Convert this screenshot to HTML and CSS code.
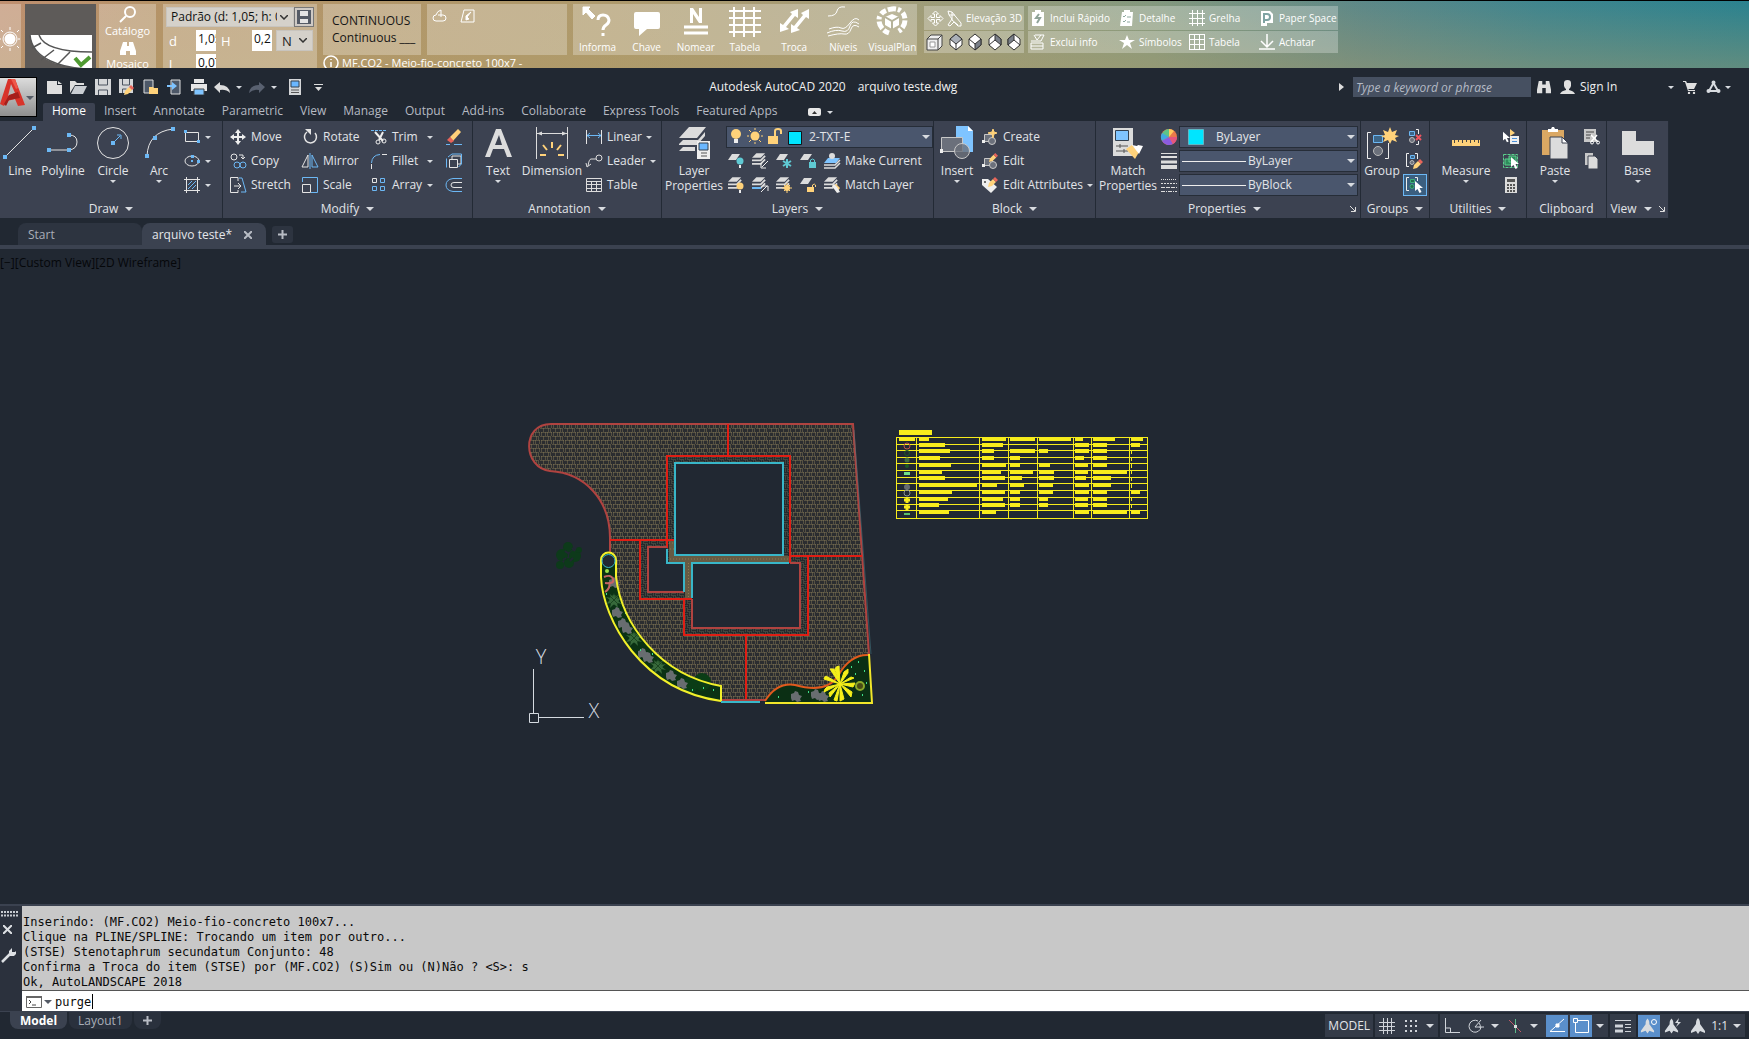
FILE: index.html
```html
<!DOCTYPE html>
<html lang="en">
<head>
<meta charset="utf-8">
<title>Autodesk AutoCAD 2020 - arquivo teste.dwg</title>
<link rel="stylesheet" href="styles.css">
</head>
<body>
<svg class="defs" aria-hidden="true">
  <symbol id="sheet" viewBox="0 0 12 6"><path d="M4 0h8L8 6H0z" fill="#dcdcdc"/></symbol>
  <symbol id="stack" viewBox="0 0 16 13"><path d="M5 0h10l-5 5H0z" fill="#dcdcdc"/><path d="M0 8h10l5-5M0 12h10l5-5" fill="none" stroke="#dcdcdc" stroke-width="2"/></symbol>
  <symbol id="pencil" viewBox="0 0 10 10"><path d="M0 10l1-4 4-4 3 3-4 4z" fill="#ffd27a"/><path d="M5 2l2-2 3 3-2 2z" fill="#e8645a"/></symbol>
  <symbol id="cursor" viewBox="0 0 8 12"><path d="M0 0v10l2.500-2 2 4 2-1-2-4H8z" fill="#fff"/></symbol>
  <symbol id="man" viewBox="0 0 16 16"><path d="M8 0c2 2 2 4 2 6l5 7v2l-5-2-2 3-2-3-5 2v-2l5-7c0-2 0-4 2-6z" fill="#d8dce0"/></symbol>
</svg>

<section class="plugin" aria-label="AutoLANDSCAPE">
  <div class="glass sun"><svg width="20" height="24" viewBox="0 0 20 24"><circle cx="10" cy="12" r="5.500" fill="#fff"/><circle cx="10" cy="12" r="7" fill="none" stroke="#fff"/><path d="M10 3V0M10 21v3M1 12h-2M18 12h3M3 5L1 3M3 19l-2 2M17 5l2-2M17 19l2 2" stroke="#fff"/></svg></div>
  <button class="curb" aria-label="Meio-fio"><svg width="71" height="64" viewBox="0 0 71 64"><path d="M5 28h62v34c-28-1-58-6-62-34z" fill="#fff"/><path d="M5 28c2 24 32 34 62 34M14 28c4 12 24 17 53 17M16 36l-9 5M29 43l-13 10M45 45l-13 13" fill="none" stroke="#555" stroke-width="1.500"/><path d="M50 51l6 7 9-8" fill="none" stroke="#4f9a32" stroke-width="4"/></svg></button>
  <div class="glass catalog">
    <button class="tool"><svg width="18" height="17" viewBox="0 0 18 17" fill="none" stroke="#fff" stroke-width="2"><circle cx="11" cy="6" r="5"/><path d="M7 10l-6 6"/></svg>Catálogo</button>
    <button class="tool"><svg width="16" height="16" viewBox="0 0 16 16" fill="#fff"><path d="M3 2h4v4h2V2h4l3 9v4h-6v-4H6v4H0v-4z"/></svg>Mosaico</button>
  </div>
  <div class="glass dims">
    <div class="dims-row"><select class="preset" aria-label="Padrão"><option>Padrão (d: 1,05; h: 0,2)</option></select><button class="save" aria-label="Salvar"><svg width="16" height="16" viewBox="0 0 16 16"><path d="M1 1h14v14H1z" fill="#555b66"/><path d="M4 2h8v5H4zM4 10h8v4H4z" fill="#e4e4e4"/></svg></button></div>
    <div class="dims-row fields"><label for="fd">d</label><input id="fd" value="1,05"><label for="fh">H</label><input id="fh" value="0,2"><select class="yes" aria-label="N"><option>N</option></select></div>
    <div class="dims-row fields"><label for="fl">l</label><input id="fl" value="0,07"></div>
  </div>
  <div class="linecol">
    <div class="glass linetype">CONTINUOUS<br>Continuous ___</div>
    <div class="info"><svg width="16" height="16" viewBox="0 0 16 16" fill="none" stroke="#fff" stroke-width="1.500"><circle cx="8" cy="8" r="7"/><path d="M8 7v5M8 4v1"/></svg>MF.CO2 - Meio-fio-concreto 100x7 -</div>
  </div>
  <div class="glass sketch"><svg width="15" height="14" viewBox="0 0 15 14" fill="none" stroke="#fff"><path d="M9 6h2q3 0 3 3t-3 3H4q-3 0-3-3t3-3q1-4 5-5v7M6 6h3"/></svg><svg width="15" height="15" viewBox="0 0 15 15" fill="none" stroke="#fff"><path d="M4 1h10v12H1z"/><path d="M11 3L7 8l2 2-3 1V7z" fill="#fff"/></svg></div>
  <div class="glass tools">
    <button class="tool"><svg width="32" height="30" viewBox="0 0 32 30" fill="none" stroke="#fff"><path d="M1 1h7L6 3l7 7-3 3-6-7-3 3z" fill="#fff"/><path d="M16 14q0-5 5-5t6 5q0 3-3 5t-3 5M21 27v3" stroke-width="3"/></svg>Informa</button>
    <button class="tool"><svg width="28" height="30" viewBox="0 0 28 30"><path d="M3 6h22q2 0 2 2v13q0 2-2 2H14l-8 7v-7H3q-2 0-2-2V8q0-2 2-2z" fill="#fff"/></svg>Chave</button>
    <button class="tool"><svg width="26" height="30" viewBox="0 0 26 30"><path d="M7 17V2h3l6 9V2h3v15h-3L10 8v9z" fill="#fff"/><path d="M1 21h24M1 27h24" stroke="#fff" stroke-width="3"/></svg>Nomear</button>
    <button class="tool"><svg width="32" height="32" viewBox="0 0 32 32"><path d="M5 1v30M15 1v30M25 1v30M0 5h32M0 12h32M0 19h32M0 26h32" stroke="#fff" stroke-width="2"/></svg>Tabela</button>
    <button class="tool"><svg width="32" height="28" viewBox="0 0 32 28"><path d="M2 26v-9l3 2L14 8l-2-2 8-3v9l-3-2L8 21l3 2zM13 27v-9l3 2L25 9l-2-2 8-4v10l-3-2-9 11 3 2z" fill="#fff"/></svg>Troca</button>
    <button class="tool"><svg width="32" height="31" viewBox="0 0 32 31" fill="none" stroke="#fff"><path d="M1 10q8 0 9-5t8-4M2 23q8-3 12-1t9-5 9-3M0 27q9-4 15-2t8-5 9-2M1 30q11-3 16-2t7-5 8-2"/></svg>Níveis</button>
    <button class="tool"><svg width="32" height="30" viewBox="0 0 32 30"><path d="M16 8l7 3v8l-7 4-7-4v-8z" fill="#fff"/><path d="M9 11l7 4 7-4M16 15v8" fill="none" stroke="#b5b39a" stroke-width="2"/><path d="M13 27c-6-2-10-7-10-13C3 8 8 4 16 3s13 4 13 11c0 5-3 10-8 12" fill="none" stroke="#fff" stroke-width="5" stroke-dasharray="6 2 8 2 3 3"/></svg>VisualPlan</button>
  </div>
  <div class="pairs elev">
    <div class="glass"><button class="act"><svg width="17" height="17" viewBox="0 0 17 17" fill="none" stroke="#fff"><path d="M8.500 1L5.500 4h2v3.500H4v-2l-3 3 3 3v-2h3.500V13h-2l3 3 3-3h-2V9.500H13v2l3-3-3-3v2H9.500V4h2z"/></svg><svg width="16" height="17" viewBox="0 0 16 17" fill="none" stroke="#fff"><path d="M1 1l4 1 4 5 5 6v3h-3L7 12l-4 4-2-1 4-6-3-4zM5 2v8l6 5M2 5h6"/></svg>Elevação 3D</button></div>
    <div class="glass cubes">
      <button aria-label="Caixa"><svg width="17" height="17" viewBox="0 0 17 17" fill="#eee" stroke="#444"><path d="M1 5l4-4h11v11l-4 4H1zM1 5h11v11M12 5l4-4"/><path d="M4 8h5v5H4z" fill="#fff" stroke="#999"/></svg></button>
      <button aria-label="Vista SO"><svg width="14" height="18" viewBox="0 0 14 18" stroke="#333"><path d="M7 1l6 5v6l-6 5-6-5V6z" fill="#fff"/><path d="M7 1l6 5-6 5-6-5z" fill="#aab0b8"/><path d="M7 11v6"/></svg></button>
      <button aria-label="Vista SE"><svg width="14" height="18" viewBox="0 0 14 18" stroke="#333"><path d="M7 1l6 5v6l-6 5-6-5V6z" fill="#fff"/><path d="M7 11l6-5v6l-6 5z" fill="#7a8089"/><path d="M1 6l6 5"/></svg></button>
      <button aria-label="Vista NE"><svg width="14" height="18" viewBox="0 0 14 18" stroke="#333"><path d="M7 1l6 5v6l-6 5-6-5V6z" fill="#fff"/><path d="M7 1l6 5v6L7 7z" fill="#7a8089"/><path d="M1 12l6-5"/></svg></button>
      <button aria-label="Vista NO"><svg width="14" height="18" viewBox="0 0 14 18" stroke="#333"><path d="M7 1l6 5v6l-6 5-6-5V6z" fill="#fff"/><path d="M7 1L1 6v6l6-5z" fill="#7a8089"/><path d="M7 7l6 5"/></svg></button>
    </div>
  </div>
  <div class="pairs acts">
    <div class="glass four">
      <button class="act"><svg width="16" height="16" viewBox="0 0 16 16"><path d="M2 2h3V0h6v2h3v14H2z" fill="#fff"/><path d="M9 4L6 8h4l-3 5" fill="none" stroke="#8fa398" stroke-width="2"/></svg>Inclui Rápido</button>
      <button class="act"><svg width="16" height="16" viewBox="0 0 16 16"><path d="M3 2h2V0h6v2h3l-1 14H1z" fill="#fff"/><path d="M4 6l1 1 2-2M8 7h4M4 11l1 1 2-2M8 12h3" fill="none" stroke="#8fa9a0"/></svg>Detalhe</button>
      <button class="act"><svg width="16" height="16" viewBox="0 0 16 16"><path d="M3.500 0v16M8.500 0v16M13.500 0v16M0 3.500h16M0 8.500h16M0 13.500h16" stroke="#fff"/></svg>Grelha</button>
      <button class="act"><svg width="16" height="16" viewBox="0 0 16 16"><path d="M2 1h9l3 3v9h-6v3H2z" fill="#fff"/><path d="M5 13V4h3q3 0 3 3t-3 3H5" fill="none" stroke="#7fa3a3" stroke-width="2"/></svg>Paper Space</button>
    </div>
    <div class="glass four">
      <button class="act"><svg width="16" height="16" viewBox="0 0 16 16" fill="none" stroke="#fff"><path d="M1 7h10l3-6H5M1 9h12v6H1zM1 12h12M4 1l3 5 4-5"/></svg>Exclui info</button>
      <button class="act"><svg width="16" height="16" viewBox="0 0 16 16"><path d="M8 1l2 5h6l-5 3 2 6-5-4-5 4 2-6-5-3h6z" fill="#fff"/></svg>Símbolos</button>
      <button class="act"><svg width="16" height="16" viewBox="0 0 16 16"><path d="M0 .5h16M0 5.500h16M0 10.500h16M0 15.500h16M.5 0v16M5.500 0v16M10.500 0v16M15.500 0v16" stroke="#fff"/></svg>Tabela</button>
      <button class="act"><svg width="16" height="16" viewBox="0 0 16 16" fill="none" stroke="#fff" stroke-width="1.500"><path d="M8 0v13M2 7l6 6 6-6M0 15h16"/></svg>Achatar</button>
    </div>
  </div>
</section>

<header class="head">
  <button class="app" aria-label="Application menu"><svg width="26" height="28" viewBox="0 0 26 28"><path d="M8 0h7l10 26-7 1-3-7-8 2-3 5-4-2z" fill="#d8332a"/><path d="M11 5l4 9-7 3z" fill="#b9b9b9"/><path d="M4 25l5-9 9-3 2 6-11 2-3 6z" fill="#a51f1c"/><path d="M11 0h4l3 9-2 1z" fill="#ee5a4c"/></svg><i class="dd dark"></i></button>
  <div class="head-main">
    <div class="titlebar">
      <div class="qat">
        <button aria-label="New"><svg width="17" height="13" viewBox="0 0 17 13"><path d="M1 0h10v4h5v9H1z" fill="#dedede"/><path d="M12 0l4 3h-4z" fill="#dedede"/></svg></button>
        <button aria-label="Open"><svg width="17" height="14" viewBox="0 0 17 14"><path d="M0 13V1h5l2 2h7v2H5z" fill="#dedede"/><path d="M5 6h12l-4 8H1z" fill="#c9cdd2"/></svg></button>
        <button aria-label="Save"><svg width="16" height="16" viewBox="0 0 16 16"><path d="M0 0h16v16H0z" fill="#d4d6d8"/><path d="M3.500 0v6h9V0M3.500 16v-5h9v5" fill="none" stroke="#4a525e"/></svg></button>
        <button aria-label="Save As"><svg width="16" height="16" viewBox="0 0 16 16"><path d="M0 0h14v14H0z" fill="#d4d6d8"/><path d="M3.500 0v6h7V0M3.500 14v-4h4" fill="none" stroke="#4a525e"/><use href="#pencil" x="5" y="6" width="10" height="10"/></svg></button>
        <button aria-label="Open from mobile"><svg width="16" height="16" viewBox="0 0 16 16"><path d="M1 1h9v13H1z" fill="#4d5868" stroke="#dedede"/><path d="M6 15V8h4l1 1h4v6z" fill="#ffd27a"/></svg></button>
        <button aria-label="Save to mobile"><svg width="16" height="16" viewBox="0 0 16 16"><path d="M4 1h9v14H4z" fill="#4d5868" stroke="#dedede"/><path d="M0 6h5V3l5 4-5 4V8H0z" fill="#7fc4ff"/></svg></button>
        <button aria-label="Plot"><svg width="16" height="16" viewBox="0 0 16 16"><path d="M3 0h10v4H3zM0 5h16v7H0z" fill="#e6e6e6"/><path d="M3 10h10v6H3z" fill="#7fc4ff" stroke="#444"/></svg></button>
        <button class="pair" aria-label="Undo"><svg width="16" height="11" viewBox="0 0 16 11"><path d="M0 5l6-5v3q9 0 10 8-4-4-10-3v3z" fill="#dcdcdc"/></svg><i class="dd s"></i></button>
        <button class="pair" aria-label="Redo"><svg width="16" height="11" viewBox="0 0 16 11"><path d="M16 5l-6-5v3q-9 0-10 8 4-4 10-3v3z" fill="#596170"/></svg><i class="dd s"></i></button>
        <button class="sheets" aria-label="Sheet set"><svg width="12" height="16" viewBox="0 0 12 16"><path d="M0 0h12v16H0z" fill="#d4d6d8"/><path d="M2 2h8v6H2z" fill="#6ab7ff" stroke="#33404f"/><path d="M2 11h8M2 13.500h8" stroke="#555"/></svg></button>
        <button class="custom" aria-label="Customize"><svg width="9" height="7" viewBox="0 0 9 7"><path d="M0 .5h9" stroke="#ddd"/><path d="M1 3h7L4.500 7z" fill="#ddd"/></svg></button>
      </div>
      <div class="title"><span>Autodesk AutoCAD 2020</span><span>arquivo teste.dwg</span></div>
      <div class="infocenter">
        <svg width="5" height="8" viewBox="0 0 5 8"><path d="M0 0l5 4-5 4z" fill="#ddd"/></svg>
        <input class="search" type="search" placeholder="Type a keyword or phrase" aria-label="Search">
        <button aria-label="Find"><svg width="14" height="14" viewBox="0 0 16 16" fill="#e0e0e0"><path d="M2 1h4v4h4V1h4l2 10v4h-6V9H6v6H0v-4z"/></svg></button>
        <button class="signin"><svg width="15" height="14" viewBox="0 0 15 14" fill="#e0e0e0"><path d="M4 3q0-3 3.500-3T11 3v3q-1 3-2 3v1q5 1 6 4H0q1-3 6-4V9Q5 9 4 6z"/></svg>Sign In<i class="dd s"></i></button>
        <button aria-label="App store"><svg width="14" height="13" viewBox="0 0 14 13" fill="#e0e0e0"><path d="M0 0h3l1 2h10l-3 6H5L6 9h6v1H5L2 1H0z"/><circle cx="6" cy="12" r="1.200"/><circle cx="11" cy="12" r="1.200"/></svg></button>
        <button class="pair" aria-label="Connect"><svg width="15" height="14" viewBox="0 0 15 14" fill="none" stroke="#d8dce0" stroke-width="2"><path d="M7.500 3L3 11h9z"/><circle cx="7.500" cy="2.500" r="1"/><circle cx="2.500" cy="11" r="1"/><circle cx="12.500" cy="11" r="1"/></svg><i class="dd s"></i></button>
      </div>
    </div>
    <nav class="tabs">
      <a class="on" href="#">Home</a><a href="#">Insert</a><a href="#">Annotate</a><a href="#">Parametric</a><a href="#">View</a><a href="#">Manage</a><a href="#">Output</a><a href="#">Add-ins</a><a href="#">Collaborate</a><a href="#">Express Tools</a><a href="#">Featured Apps</a>
      <button class="pair" aria-label="Minimize ribbon"><svg width="13" height="8" viewBox="0 0 13 8"><rect width="13" height="8" rx="2" fill="#e8e8e8"/><path d="M4 6l2.500-3L9 6z" fill="#333"/></svg><i class="dd s"></i></button>
    </nav>
  </div>
</header>

<main class="ribbon">
  <section class="panel draw">
    <div class="body">
      <button class="big w40"><svg width="34" height="34" viewBox="0 0 34 34"><path d="M2 31L31 2" stroke="#e4e4e4"/><path d="M0 29h4v4H0zM29 0h4v4h-4z" fill="#6cb8f5"/></svg>Line</button>
      <button class="big w46"><svg width="34" height="34" viewBox="0 0 34 34"><path d="M3 24h20q8-1 8-8t-8-7" fill="none" stroke="#e4e4e4"/><path d="M1 22h4v4H1zM21 22h4v4h-4zM21 7h4v4h-4z" fill="#6cb8f5"/></svg>Polyline</button>
      <button class="big w54"><svg width="34" height="34" viewBox="0 0 34 34"><circle cx="17" cy="17" r="15.500" fill="none" stroke="#e4e4e4"/><path d="M15 15h4v4h-4z" fill="#6cb8f5"/><path d="M17 17l7-7M21 9h4v4" fill="none" stroke="#6cb8f5"/></svg>Circle<i class="dd s"></i></button>
      <button class="big w38"><svg width="34" height="34" viewBox="0 0 34 34"><path d="M5 30Q6 6 31 3" fill="none" stroke="#e4e4e4"/><path d="M3 28h4v4H3zM11 10h4v4h-4zM29 1h4v4h-4z" fill="#6cb8f5"/></svg>Arc<i class="dd s"></i></button>
      <div class="col icons">
        <button class="row" aria-label="Rectangle"><svg width="18" height="16" viewBox="0 0 18 16"><path d="M2.500 3.500h13v9h-13z" fill="none" stroke="#e4e4e4"/><path d="M1 1h3v3H1zM14 11h3v3h-3z" fill="#6cb8f5"/></svg><i class="dd s"></i></button>
        <button class="row" aria-label="Ellipse"><svg width="18" height="16" viewBox="0 0 18 16"><ellipse cx="9" cy="8" rx="7" ry="5" fill="none" stroke="#e4e4e4"/><path d="M8 2h3v3H8zM8 7h2v2H8zM14 7h3v3h-3z" fill="#6cb8f5"/></svg><i class="dd s"></i></button>
        <button class="row" aria-label="Hatch"><svg width="18" height="16" viewBox="0 0 18 16"><path d="M3.500 0v16M14.500 0v16M1 2.500h16M1 13.500h16" stroke="#e4e4e4"/><path d="M5 8l4-4M5 12l8-8M9 12l4-4" stroke="#6cb8f5"/></svg><i class="dd s"></i></button>
      </div>
    </div>
    <h2>Draw<i class="dd"></i></h2>
  </section>

  <section class="panel modify">
    <div class="body">
      <div class="col c72">
        <button class="row"><svg width="18" height="16" viewBox="0 0 18 16"><path d="M9 0l3 4h-2v3h3V5l4 3-4 3V9h-3v3h2l-3 4-3-4h2V9H5v2L1 8l4-3v2h3V4H6z" fill="#eee"/></svg>Move</button>
        <button class="row"><svg width="18" height="16" viewBox="0 0 18 16" fill="none"><circle cx="5" cy="4" r="3" stroke="#e4e4e4"/><path d="M10 2h4v4M12 4l2 2 2-2" stroke="#e4e4e4"/><circle cx="8" cy="12" r="3" stroke="#6cb8f5"/><circle cx="14" cy="12" r="3" stroke="#6cb8f5"/></svg>Copy</button>
        <button class="row"><svg width="18" height="16" viewBox="0 0 18 16" fill="none"><path d="M9 4V.5H1.500v15H9V13M5 9h7M9 6l3 3-3 3" stroke="#e4e4e4"/><path d="M10 1h3l4 14h-5" stroke="#6cb8f5"/></svg>Stretch</button>
      </div>
      <div class="col c69">
        <button class="row"><svg width="18" height="16" viewBox="0 0 18 16"><path d="M6 3a6 6 0 1 0 8 1" fill="none" stroke="#e4e4e4" stroke-width="1.500"/><path d="M4 0h6v6z" fill="#e4e4e4"/></svg>Rotate</button>
        <button class="row"><svg width="18" height="16" viewBox="0 0 18 16" fill="none"><path d="M7 2v12H1z" stroke="#e4e4e4"/><path d="M11 2v12h6z" stroke="#6cb8f5"/><path d="M9 0v16" stroke="#6cb8f5"/></svg>Mirror</button>
        <button class="row"><svg width="18" height="16" viewBox="0 0 18 16" fill="none"><path d="M1.500 5V.5h15v15H10" stroke="#6cb8f5"/><path d="M1.500 7.500h8v8h-8z" stroke="#e4e4e4"/></svg>Scale</button>
      </div>
      <div class="col c75">
        <button class="row"><svg width="18" height="16" viewBox="0 0 18 16" fill="none"><path d="M1 1.500h16" stroke="#6cb8f5" stroke-dasharray="3 1"/><path d="M5 3l8 9M13 3l-4 8" stroke="#eee" stroke-width="2"/><circle cx="8" cy="13" r="2" stroke="#eee"/><circle cx="14" cy="12" r="2" stroke="#eee"/></svg>Trim<i class="dd s end"></i></button>
        <button class="row"><svg width="18" height="16" viewBox="0 0 18 16" fill="none"><path d="M1.500 10Q2 2 10 1.500" stroke="#6cb8f5"/><path d="M12 1.500h5M1.500 11v5" stroke="#e4e4e4"/></svg>Fillet<i class="dd s end"></i></button>
        <button class="row"><svg width="18" height="16" viewBox="0 0 18 16" fill="none"><path d="M2.500 1.500h4v4h-4z" stroke="#e4e4e4"/><path d="M10.500 1.500h4v4h-4zM2.500 9.500h4v4h-4zM10.500 9.500h4v4h-4z" stroke="#6cb8f5"/></svg>Array<i class="dd s end"></i></button>
      </div>
      <div class="col">
        <button class="row" aria-label="Erase"><svg width="18" height="16" viewBox="0 0 18 16"><path d="M5 8l8-8 3 3-8 9z" fill="#ffd27a"/><path d="M5 8l4 4-3 2-4-3z" fill="#e8645a"/><path d="M1 15.500h4M9 15.500h8" stroke="#6cb8f5"/></svg></button>
        <button class="row" aria-label="Explode"><svg width="18" height="16" viewBox="0 0 18 16" fill="none"><path d="M4.500 6.500h8v8h-8zM7 6V3h9v8h-3" stroke="#e4e4e4"/><path d="M1.500 5.500v9M3 4l4-3h9.500v10l-3 3" stroke="#6cb8f5"/></svg></button>
        <button class="row" aria-label="Offset"><svg width="18" height="16" viewBox="0 0 18 16" fill="none"><path d="M17 1.500H8q-7 1-7 6.500t7 6.500h9" stroke="#6cb8f5"/><path d="M17 5.500H9q-3 0-3 2.500t3 2.500h8" stroke="#e4e4e4"/></svg></button>
      </div>
    </div>
    <h2>Modify<i class="dd"></i></h2>
  </section>

  <section class="panel annotation">
    <div class="body">
      <button class="big w50"><svg width="34" height="34" viewBox="0 0 34 34"><path d="M4 31L15 3h5l11 28h-5l-3-8H12l-3 8zM14 19h7l-3-10z" fill="#dcdcdc"/></svg>Text<i class="dd s"></i></button>
      <button class="big w58"><svg width="34" height="34" viewBox="0 0 34 34"><path d="M1.500 1v32M32.500 1v32M2 7.500h30" stroke="#dcdcdc"/><path d="M2 7.500l5-2v4zM32 7.500l-5-2v4z" fill="#dcdcdc"/><path d="M17 16v6M8 19l4 5M26 19l-4 5M5 29h6M23 29h6" stroke="#ffd27a" stroke-width="2"/></svg>Dimension</button>
      <div class="col ann">
        <button class="row"><svg width="18" height="16" viewBox="0 0 18 16"><path d="M1.500 1v14M16.500 1v14" stroke="#e4e4e4"/><path d="M2 6.500h14M5 4L2 6.500 5 9M13 4l3 2.500L13 9" fill="none" stroke="#6cb8f5"/></svg>Linear<i class="dd s gap"></i></button>
        <button class="row"><svg width="18" height="16" viewBox="0 0 18 16" fill="none" stroke="#dcdcdc"><circle cx="14" cy="5" r="3"/><path d="M11 6H6q-2 0-3 7M1 10l1 4 4-3"/></svg>Leader<i class="dd s gap"></i></button>
        <button class="row"><svg width="18" height="16" viewBox="0 0 18 16" fill="none" stroke="#dcdcdc"><path d="M1.500 1.500h15v13h-15zM1 4.500h16M1 7.500h16M1 11.500h16M6.500 4v10M11.500 4v10"/></svg>Table</button>
      </div>
    </div>
    <h2>Annotation<i class="dd"></i></h2>
  </section>

  <section class="panel layers">
    <div class="body">
      <button class="big w64"><svg width="34" height="34" viewBox="0 0 34 34"><path d="M12 1h17l-9 11H2zM2 18l4-4h15l7-8v4l-8 9H2zM2 25l4-4h12v4z" fill="#dcdcdc"/><path d="M20 15h13v18H20z" fill="#eee"/><path d="M22 17h9v7h-9z" fill="#6ab7ff" stroke="#33404f"/><path d="M24 27h6M24 30h6" stroke="#555"/></svg>Layer<br>Properties</button>
      <div class="col lay">
        <div class="combo"><svg width="78" height="18" viewBox="0 0 78 18"><circle cx="7" cy="6" r="5" fill="#ffd27a"/><path d="M5 11h4v4H5z" fill="#eee"/><circle cx="26" cy="8" r="4.500" fill="#ffd27a"/><path d="M26 0v2M26 14v2M18 8h2M32 8h2M20 2l2 2M30 12l2 2M20 14l2-2M30 4l2-2" stroke="#ffd27a"/><path d="M39 8h10v8H39z" fill="#ffd27a"/><path d="M46 8V3q0-2 3-2t3 2v3" fill="none" stroke="#ffd27a" stroke-width="2"/><path d="M59.500 3.500h13v13h-13z" fill="#00e5ff" stroke="#10151c"/></svg><select aria-label="Layer"><option>2-TXT-E</option></select><i class="dd"></i></div>
        <div class="line">
          <button aria-label="Off"><svg width="18" height="16" viewBox="0 0 18 16"><use href="#sheet" x="1" y="1" width="12" height="6"/><circle cx="13" cy="8" r="3.500" fill="#5fc9d3"/><path d="M12 12h2v3h-2z" fill="#eee"/></svg></button>
          <button aria-label="Isolate"><svg width="18" height="16" viewBox="0 0 18 16"><use href="#stack" x="1" width="14" height="12"/><path d="M17 8l-6 6M10 10v5h5" stroke="#eee" fill="none"/></svg></button>
          <button aria-label="Freeze"><svg width="18" height="16" viewBox="0 0 18 16"><use href="#sheet" x="1" y="1" width="12" height="6"/><path d="M12 6v9M8 8l8 5M16 8l-8 5" stroke="#5fc9d3" stroke-width="2"/></svg></button>
          <button aria-label="Lock"><svg width="18" height="16" viewBox="0 0 18 16"><use href="#sheet" x="1" y="1" width="12" height="6"/><path d="M10 9h7v6h-7z" fill="#5fc9d3"/><path d="M11.500 9V7q2-2 4 0v2" fill="none" stroke="#5fc9d3"/></svg></button>
          <button class="row"><svg width="18" height="16" viewBox="0 0 18 16"><path d="M5 5h12l-4 5H1z" fill="#7fc4ff"/><path d="M1 12h11l5-5M1 15h11l5-5" fill="none" stroke="#dcdcdc" stroke-width="1.500"/><circle cx="9" cy="3" r="3" fill="#dcdcdc"/></svg>Make Current</button>
        </div>
        <div class="line">
          <button aria-label="On"><svg width="18" height="16" viewBox="0 0 18 16"><use href="#stack" x="1" width="14" height="12"/><circle cx="13" cy="9" r="3.500" fill="#ffd27a"/><path d="M12 13h2v3h-2z" fill="#eee"/></svg></button>
          <button aria-label="Unisolate"><svg width="18" height="16" viewBox="0 0 18 16"><use href="#stack" x="1" width="14" height="12"/><path d="M1 11h9" stroke="#6cb8f5" stroke-width="2"/><path d="M10 15l6-6M12 9h5v5" stroke="#eee" fill="none"/></svg></button>
          <button aria-label="Thaw"><svg width="18" height="16" viewBox="0 0 18 16"><use href="#stack" x="1" width="14" height="12"/><circle cx="12" cy="11" r="3" fill="#ffd27a"/><path d="M12 6v10M7 11h10M9 8l6 6M15 8l-6 6" stroke="#ffd27a"/></svg></button>
          <button aria-label="Unlock"><svg width="18" height="16" viewBox="0 0 18 16"><use href="#sheet" x="1" y="1" width="12" height="6"/><path d="M8 10h7v5H8z" fill="#ffd27a"/><path d="M13.500 10V8q2-2 3 0v2" fill="none" stroke="#ffd27a"/></svg></button>
          <button class="row"><svg width="18" height="16" viewBox="0 0 18 16"><use href="#stack" x="1" width="14" height="12"/><path d="M9 9l4-2 4 4-3 4z" fill="#ffd27a"/><path d="M9 9l2-2 3 3 3 5-3 1z" fill="#eee"/></svg>Match Layer</button>
        </div>
      </div>
    </div>
    <h2>Layers<i class="dd"></i></h2>
  </section>

  <section class="panel block">
    <div class="body">
      <button class="big w46"><svg width="34" height="34" viewBox="0 0 34 34"><path d="M16 0h12l5 5v21H16z" fill="#7fc4ff"/><path d="M28 0v5h5z" fill="#fff"/><path d="M1.500 11.500h21v14h-21z" fill="#6b707b" stroke="#c8c8c8"/><circle cx="22" cy="25" r="7.500" fill="#6b707b" fill-opacity=".8" stroke="#c8c8c8"/><path d="M0 23h3v4H0z" fill="#eee"/></svg>Insert<i class="dd s"></i></button>
      <div class="col blk">
        <button class="row"><svg width="18" height="16" viewBox="0 0 18 16"><path d="M3.500 5.500h8v7h-8z" fill="#6b707b" stroke="#c8c8c8"/><circle cx="11" cy="12" r="3.500" fill="#6b707b" stroke="#c8c8c8"/><path d="M1 11h3v3H1z" fill="#eee"/><path d="M12 0l1 3 3 1-3 1-1 4-1-4-4-1 4-1z" fill="#ffd27a" stroke="#ffd27a"/></svg>Create</button>
        <button class="row"><svg width="18" height="16" viewBox="0 0 18 16"><path d="M3.500 5.500h8v7h-8z" fill="#6b707b" stroke="#c8c8c8"/><circle cx="12" cy="12" r="3.500" fill="#6b707b" stroke="#c8c8c8"/><path d="M1 11h3v3H1z" fill="#eee"/><use href="#pencil" x="8" width="9" height="9"/></svg>Edit</button>
        <button class="row"><svg width="18" height="16" viewBox="0 0 18 16"><path d="M1 2h6l9 8-6 6-9-8z" fill="#eee"/><circle cx="4" cy="5" r="1" fill="#444"/><use href="#pencil" x="7" width="10" height="10"/></svg>Edit Attributes<i class="dd s"></i></button>
      </div>
    </div>
    <h2>Block<i class="dd"></i></h2>
  </section>

  <section class="panel props">
    <div class="body">
      <button class="big w64"><svg width="34" height="34" viewBox="0 0 34 34"><path d="M2 2h20v28H2z" fill="#dcdcdc"/><path d="M4.500 4.500h13v10h-13z" fill="#7fc4ff" stroke="#33404f"/><path d="M5 20h12M5 25h12M9 18v4M13 23v4" stroke="#555"/><path d="M15 23l6-4 7 7-4 7z" fill="#ffd27a"/><path d="M21 19l5 1 1-1 5 1-3 6-1 2z" fill="#fff"/></svg>Match<br>Properties</button>
      <div class="col propcol">
        <div class="line"><svg width="18" height="18" viewBox="0 0 18 18"><circle cx="9" cy="9" r="8" fill="#eb7a4a"/><path d="M9 9V1a8 8 0 0 0-7 5z" fill="#5cc487"/><path d="M9 9L2 5a8 8 0 0 0 0 8z" fill="#3fa9e0"/><path d="M9 9l-7 4a8 8 0 0 0 11 3z" fill="#8a5ce0"/><path d="M9 9l4 7a8 8 0 0 0 4-7z" fill="#e5557f"/><path d="M9 9l5-6a8 8 0 0 0-5-2z" fill="#ffc95c"/></svg><div class="combo"><svg width="28" height="16" viewBox="0 0 28 16"><path d="M6.500.5h15v15h-15z" fill="#00e5ff" stroke="#5fb8c4"/></svg><select class="color" aria-label="Color"><option>ByLayer</option></select><i class="dd"></i></div></div>
        <div class="line"><svg width="18" height="18" viewBox="0 0 18 18"><path d="M1 1.500h16" stroke="#ddd"/><path d="M1 5h16" stroke="#ddd" stroke-width="2"/><path d="M1 10h16" stroke="#ddd" stroke-width="3"/><path d="M1 15h16" stroke="#ddd" stroke-width="4"/></svg><div class="combo"><span class="sample"></span><select aria-label="Lineweight"><option>ByLayer</option></select><i class="dd"></i></div></div>
        <div class="line"><svg width="18" height="18" viewBox="0 0 18 18" stroke="#ddd"><path d="M1 3.500h16" stroke-dasharray="1 1"/><path d="M1 7.500h16" stroke-dasharray="2 1"/><path d="M1 11.500h16" stroke-dasharray="4 1"/><path d="M1 15.500h16" stroke-dasharray="4 1 1 1"/></svg><div class="combo"><span class="sample"></span><select aria-label="Linetype"><option>ByBlock</option></select><i class="dd"></i></div></div>
      </div>
    </div>
    <h2>Properties<i class="dd"></i><svg class="launch" width="6" height="6" viewBox="0 0 6 6"><path d="M0 0l5 5M5.500 1v4.500H1" fill="none" stroke="#ddd"/></svg></h2>
  </section>

  <section class="panel groups">
    <div class="body">
      <button class="big w42"><svg width="34" height="34" viewBox="0 0 34 34"><path d="M6 6.500H2.500v26H6M20 32.500h3.500V17" fill="none" stroke="#eee"/><path d="M8.500 9.500h9v7h-9z" fill="#3d6688" stroke="#6cb8f5"/><circle cx="13" cy="25" r="4.500" fill="#6b707b" stroke="#bbb"/><path d="M25 1l2 5 5-2-2 5 4 1-4 2 2 4-5-2-2 4-2-4-5 2 2-4-4-2 4-1-2-5 5 2z" fill="#ffd27a"/></svg>Group</button>
      <div class="col">
        <button class="row" aria-label="Ungroup"><svg width="18" height="16" viewBox="0 0 18 16"><path d="M3.500 2.500h5v4h-5z" fill="#3d6688" stroke="#6cb8f5"/><circle cx="6" cy="11" r="2.500" fill="#6b707b" stroke="#bbb"/><path d="M10 .5h2.500V5M12.500 12v3.500H10" fill="none" stroke="#eee"/><path d="M10 6l5 5M15 6l-5 5" stroke="#ee5560" stroke-width="2"/></svg></button>
        <button class="row" aria-label="Group edit"><svg width="18" height="16" viewBox="0 0 18 16"><path d="M3 .5H.5v13H3M9 .5h2.500V6" fill="none" stroke="#eee"/><path d="M4.500 2.500h4v3h-4z" fill="#3d6688" stroke="#6cb8f5"/><circle cx="6" cy="9.500" r="2" fill="#6b707b" stroke="#bbb"/><use href="#pencil" x="7" y="6" width="10" height="10"/></svg></button>
        <button class="row sel" aria-label="Group selection"><svg width="18" height="16" viewBox="0 0 18 16"><path d="M3 .5H.5v13H3M9 .5h2.500V4" fill="none" stroke="#eee"/><path d="M4.500 2.500h4v3h-4z" fill="#24704d" stroke="#3fae7c"/><circle cx="6" cy="9.500" r="2" fill="#24704d" stroke="#3fae7c"/><use href="#cursor" x="9" y="4" width="8" height="12"/></svg></button>
      </div>
    </div>
    <h2>Groups<i class="dd"></i></h2>
  </section>

  <section class="panel utils">
    <div class="body">
      <button class="big w72"><svg width="34" height="34" viewBox="0 0 34 34"><path d="M3 14h28v6H3z" fill="#ffd27a"/><path d="M5.500 14v3M9.500 14v2M13.500 14v3M17.500 14v2M21.500 14v3M25.500 14v2M29.500 14v3" stroke="#444"/></svg>Measure<i class="dd s"></i></button>
      <div class="col">
        <button class="row" aria-label="Quick select"><svg width="18" height="16" viewBox="0 0 18 16"><path d="M8 0l5 4-5 3z" fill="#ffd27a"/><use href="#cursor" x="1" y="2" width="7" height="12"/><path d="M8 7h9v8H8z" fill="#eee"/><path d="M10 9.500h5M10 12.500h5" stroke="#4a90d9"/></svg></button>
        <button class="row" aria-label="Select all"><svg width="18" height="16" viewBox="0 0 18 16"><path d="M1.500 1.500h14v13h-14z" fill="none" stroke="#5ad08c" stroke-dasharray="3 1"/><path d="M7 3h7v6H7zM3 6h7v6H3z" fill="#2f8a5c" stroke="#5ad08c"/><use href="#cursor" x="9" y="4" width="8" height="12"/></svg></button>
        <button class="row" aria-label="Calculator"><svg width="18" height="16" viewBox="0 0 18 16"><path d="M3 0h12v16H3z" fill="#dcdcdc"/><path d="M5 2h8v3H5z" fill="#555"/><path d="M5 8h8M5 11h8M5 14h8" stroke="#555" stroke-width="2" stroke-dasharray="2 1"/></svg></button>
      </div>
    </div>
    <h2>Utilities<i class="dd"></i></h2>
  </section>

  <section class="panel clip">
    <div class="body">
      <button class="big w56"><svg width="34" height="34" viewBox="0 0 34 34"><path d="M4 4h22v25H4z" fill="#dba863"/><path d="M10 6V3h3l1-2h2l1 2h3v3z" fill="#fff"/><path d="M12 11h12l6 6v16H12z" fill="#dcdcdc" stroke="#3c4251"/><path d="M24 11v6h6z" fill="#fff" stroke="#3c4251"/></svg>Paste<i class="dd s"></i></button>
      <div class="col">
        <button class="row" aria-label="Cut"><svg width="18" height="16" viewBox="0 0 18 16"><path d="M1 0h12v13H1z" fill="#c8c8c8"/><path d="M3 3h8M3 6h5M3 9h4" stroke="#444"/><path d="M8 6l7 7M14 6l-6 7" stroke="#fff" stroke-width="1.500"/><circle cx="9" cy="13.500" r="1.500" fill="none" stroke="#fff"/><circle cx="15" cy="13.500" r="1.500" fill="none" stroke="#fff"/></svg></button>
        <button class="row" aria-label="Copy"><svg width="18" height="16" viewBox="0 0 18 16"><path d="M2 0h8v12H2z" fill="#c8c8c8"/><path d="M5 3h7l3 3v10H5z" fill="#dcdcdc" stroke="#3c4251"/></svg></button>
      </div>
    </div>
    <h2>Clipboard</h2>
  </section>

  <section class="panel view">
    <div class="body"><button class="big w62"><svg width="34" height="34" viewBox="0 0 34 34"><path d="M1 5h14v10h18v14H1z" fill="#dcdcdc"/></svg>Base<i class="dd s"></i></button></div>
    <h2>View<i class="dd"></i><svg class="launch" width="6" height="6" viewBox="0 0 6 6"><path d="M0 0l5 5M5.500 1v4.500H1" fill="none" stroke="#ddd"/></svg></h2>
  </section>
</main>

<nav class="files">
  <a class="file" href="#">Start</a>
  <a class="file on" href="#">arquivo teste*<svg width="8" height="8" viewBox="0 0 8 8"><path d="M0 0l8 8M8 0L0 8" stroke="#b8bcc4" stroke-width="2"/></svg></a>
  <button class="add" aria-label="New tab"><svg width="9" height="9" viewBox="0 0 9 9"><path d="M4.500 0v9M0 4.500h9" stroke="#b8bcc4" stroke-width="2"/></svg></button>
</nav>

<section class="canvas">
  <p class="viewport">[−][Custom View][2D Wireframe]</p>
  <svg class="drawing" aria-label="Site plan">
    <defs>
      <pattern id="brick" width="12" height="8" patternUnits="userSpaceOnUse"><path d="M1 .5h11M0 4.500h10M1.500 0v4M5.500 0v4M7.500 0v4M11.500 0v4M3.500 4v4M8.500 4v4M10.500 4v4" stroke="#8a7d58" stroke-opacity=".45" fill="none"/></pattern>
      <pattern id="weave" width="8" height="8" patternUnits="userSpaceOnUse"><path d="M0 1.500h4M0 3.500h4M5.500 0v4M7.500 0v4M4 5.500h4M4 7.500h4M1.500 4v4M3.500 4v4" stroke="#4a4d44" stroke-opacity=".8"/></pattern>
      <g id="bush"><circle r="5" fill="#255229"/><path d="M0-7l1 5 4-4-2 5 5-1-4 3 4 3-5-1 1 5-4-4-4 4 1-5-5 1 4-4-4-3 5 1-1-4 3 3z" fill="#37693a"/><path d="M-4-4l8 8M4-4l-8 8" stroke="#1b4520"/></g>
      <path id="rock" d="M-5-3l3-1 1-2 3 1 1 3 3 1-2 3 1 2-4 1-2-2-3 1-1-3z" fill="#686d70"/>
    </defs>
    <g transform="translate(0 -249)" fill="none">
      <path d="M551 424H853L869 654Q856 653 846 664Q835 690 815 688Q777 678 765 701H721V686C660 675 622 625 616 575V560Q614 552 610 553V538C610 500 585 473 550 471C523 468 521 424 551 424z" fill="#2b2d30"/>
      <path d="M551 424H853L869 654Q856 653 846 664Q835 690 815 688Q777 678 765 701H721V686C660 675 622 625 616 575V560Q614 552 610 553V538C610 500 585 473 550 471C523 468 521 424 551 424z" fill="url(#brick)"/>
      <path d="M667 456H790V555H808V635H684V599H640V540H667z" fill="#25292d"/>
      <path d="M667 456H790V555H808V635H684V599H640V540H667z" fill="url(#weave)"/>
      <path d="M675 463H783V555H675zM648 547H667V563H684V592H648zM692 563H800V628H692z" fill="#212832"/>
      <path d="M669 541H675V556H789V562H691V598H685V562H669z" fill="#675b43"/>
      <path d="M669 543H675M670 549h5M670 559H789M688.500 563V597" stroke="#8f7c50" stroke-dasharray="1 2"/>
      <path d="M610 553V538C610 500 585 473 550 471C523 468 521 424 551 424H853L869 654" stroke="#b04340" stroke-width="2"/>
      <path d="M854 430L871 654" stroke="#47808a" stroke-opacity=".5"/>
      <path d="M728 424V456M610 540H640M790 556H862M746 635V700M667 548V456H790V563M675 540H640V599H692M684 599V635H808V556H790" stroke="#e01e14" stroke-width="2"/>
      <path d="M667 547H648V592H684M692 599V628H800V563H790M721 700h44" stroke="#b04340" stroke-width="2"/>
      <path d="M675 463H783V555H675zM667 549V563H684V592M692 598V563H789" stroke="#38b6c8" stroke-width="2"/>
      <path d="M601 560V577C603 620 641 690 721 701V686C660 675 622 625 616 577V560a7 7 0 0 0-15 0z" fill="#0b3214"/>
      <g fill="#0b3d16"><circle cx="702" cy="682" r="9"/><circle cx="690" cy="685" r="8"/><circle cx="791" cy="696" r="9"/><circle cx="781" cy="698" r="6"/></g>
      <use href="#bush" x="614" y="600"/><use href="#bush" x="634" y="638"/><use href="#bush" x="658" y="666"/>
      <use href="#rock" x="614" y="583"/><use href="#rock" x="617" y="613"/><use href="#rock" x="623" y="624"/><use href="#rock" x="627" y="629"/><use href="#rock" x="643" y="654"/><use href="#rock" x="648" y="658"/><use href="#rock" x="671" y="676"/><use href="#rock" x="682" y="684"/>
      <path d="M604 577q7-3 9 2t-8 4M605 592q6-4 4-10" stroke="#c46464" stroke-width="2"/><circle cx="607" cy="571" r="2" fill="#9be04a"/>
      <path d="M625 613h1M640 650h1M606 594h1M692 690h1M703 688h1M652 654h1M713 690h1" stroke="#3fe08a" stroke-width="2"/>
      <path d="M601 560V577C603 620 641 690 721 701V686C660 675 622 625 616 577V560a7 7 0 0 0-15 0z" stroke="#f2f02a" stroke-width="2"/>
      <circle cx="608.500" cy="561" r="6.500" fill="#212832" stroke="#38b6c8"/>
      <path d="M765 701Q777 678 800 686Q835 696 842 670Q853 654 869 654L872 703H765z" fill="#0b2f14"/>
      <path d="M858 662h1M864 671h1M855 674h1M866 683h1M851 667h1M778 697h1M808 692h1M862 695h1" stroke="#3fe08a" stroke-width="2"/>
      <use href="#rock" x="796" y="697"/><use href="#rock" x="816" y="695"/><use href="#rock" x="823" y="697"/>
      <path d="M765 701Q777 682 795 685Q826 694 838 676Q850 654 869 655" stroke="#e05a1e" stroke-width="2"/>
      <path d="M869 654L872 703H765" stroke="#f2e62a" stroke-width="2"/>
      <path d="M721 702H760" stroke="#38b6c8" stroke-width="2"/>
      <path d="M840 684l-14-8q-2 1-2 3zM840 684l-13 3q-3 2-3 5zM840 684l-10-15h4zM840 684l-1-18q-3 0-4 3zM840 684l4-12 4-3v4zM840 684l15-1-2 4zM840 684l12 8-1 5zM840 684l4 15-4 2zM840 684l-3 17-3-1zM840 684l-10 13-1-4zM840 684l11-7 3 1z" fill="#f5ef1a" stroke="#f5ef1a"/>
      <circle cx="860" cy="686" r="4" fill="#4a4a16" stroke="#8aa82a" stroke-width="2"/>
      <g fill="#0d3a1a"><circle cx="568" cy="547" r="5"/><circle cx="575" cy="556" r="6"/><circle cx="562" cy="555" r="6"/><circle cx="569" cy="563" r="5"/><circle cx="560" cy="565" r="4"/><circle cx="579" cy="550" r="3"/></g>
      <path d="M565 551l4 3M573 558l-3 3M563 560l3-2M575 551l-3-3" stroke="#212832" stroke-width="2"/>
      <path d="M533.500 669V713M538 717.500H584M529.500 713.500h9v9h-9z" stroke="#d5dae0"/>
      <g class="ucs"><text x="541" y="664">Y</text><text x="594" y="718">X</text></g>
      <g stroke="#f7ec1c">
        <path d="M896.500 437V519M916.500 437V519M979.500 437V519M1008.500 437V519M1037.500 437V519M1073.500 437V519M1091.500 437V519M1129.500 437V519M1147.500 437V519M896 437.500h252M896 444.500h252M896 450.500h252M896 457.500h252M896 463.500h252M896 470.500h252M896 477.500h252M896 483.500h252M896 490.500h252M896 497.500h252M896 504.500h252M896 510.500h252M896 518.500h252"/>
        <path d="M899 432.500h33" stroke-width="5"/>
        <path stroke-width="4" d="M899 439h16M919 439h10M919 445h26M919 451h31M919 458h21M919 465h32M919 472h23M919 478h26M919 485h58M919 492h33M919 499h29M919 505h20M919 512h30
        M982 439h24M982 445h21M982 451h12M982 458h12M982 465h24M982 472h19M982 478h23M982 485h15M982 492h23M982 499h21M982 505h23M982 512h14
        M1010 439h25M1010 451h25M1010 458h10M1010 465h10M1010 472h23M1010 478h12M1010 485h14M1010 492h10M1010 499h10M1010 505h10
        M1039 439h32M1039 451h9M1039 465h11M1039 472h15M1039 478h15M1039 485h14M1039 492h14M1039 499h9M1039 505h9
        M1075 439h8M1075 445h14M1075 451h14M1075 458h9M1075 465h13M1075 472h13M1075 478h11M1075 485h14M1075 492h14M1075 499h13M1075 505h13M1075 512h14
        M1093 439h22M1093 445h14M1093 451h14M1093 458h14M1093 465h14M1093 472h34M1093 478h18M1093 485h18M1093 492h14M1093 499h14M1093 505h14M1093 512h34
        M1131 439h12M1131 445h9M1131 452h1M1131 459h1M1131 466h1M1131 472h1M1131 479h1M1131 486h1M1131 492h9M1131 499h1M1131 506h1M1131 512h9"/>
      </g>
      <circle cx="907" cy="446" r="3" stroke="#c0564a"/><circle cx="907" cy="453" r="2.500" stroke="#1c5a26"/><circle cx="907" cy="460" r="2.500" fill="#3f6a3f"/><circle cx="907" cy="466" r="2" fill="#1c5a26"/><path d="M904 473.500h6" stroke="#6fe08a" stroke-width="3"/><circle cx="907" cy="487" r="3" fill="#666b70"/><circle cx="907" cy="493" r="3" stroke="#8a8f95"/><path d="M904 500h6M907 497v6M904 507h6M907 504v6" stroke="#f7ec1c" stroke-width="3"/><path d="M904 514h6" stroke="#5ac06a" stroke-width="2"/>
    </g>
  </svg>
</section>

<section class="command">
  <div class="grip">
    <svg width="17" height="6" viewBox="0 0 17 6"><path d="M0 1h17M0 4.500h17" stroke="#c8ccd2" stroke-width="2" stroke-dasharray="2 1"/></svg>
    <button aria-label="Close"><svg width="9" height="9" viewBox="0 0 9 9"><path d="M0 0l9 9M9 0L0 9" stroke="#dde0e4" stroke-width="2"/></svg></button>
    <button aria-label="Customize"><svg width="15" height="15" viewBox="0 0 15 15"><path d="M1 14l8-8" stroke="#dde0e4" stroke-width="2.500"/><path d="M8 7V3l3-3v4h3l1-1v3l-2 2h-4z" fill="#dde0e4"/></svg></button>
  </div>
  <div class="console">
    <pre>Inserindo: (MF.CO2) Meio-fio-concreto 100x7...
Clique na PLINE/SPLINE: Trocando um item por outro...
(STSE) Stenotaphrum secundatum Conjunto: 48
Confirma a Troca do item (STSE) por (MF.CO2) (S)Sim ou (N)Não ? &lt;S&gt;: s
Ok, AutoLANDSCAPE 2018</pre>
    <div class="prompt"><button class="pair" aria-label="Recent commands"><svg width="16" height="12" viewBox="0 0 16 12"><path d="M.5.5h15v11H.5z" fill="#fff" stroke="#666"/><path d="M0 1h16" stroke="#666" stroke-width="2"/><path d="M3 4l2 2-2 2M6 9h4" fill="none" stroke="#444"/></svg><i class="dd dark"></i></button><input id="cmd" value="purge" aria-label="Command"><span class="caret"></span></div>
  </div>
</section>

<footer class="status">
  <nav class="layouts"><a class="on" href="#">Model</a><a href="#">Layout1</a><button aria-label="New layout"><svg width="9" height="9" viewBox="0 0 9 9"><path d="M4.500 0v9M0 4.500h9" stroke="#b8bcc4" stroke-width="2"/></svg></button></nav>
  <div class="modes">
    <button class="grp model">MODEL</button>
    <div class="grp">
      <button aria-label="Grid"><svg width="16" height="16" viewBox="0 0 16 16"><path d="M4.500 0v16M8.500 0v16M12.500 0v16M0 4.500h16M0 8.500h16M0 12.500h16" stroke="#d0d4da"/></svg></button>
      <button class="pair" aria-label="Snap"><svg width="16" height="16" viewBox="0 0 16 16"><path d="M2 3h14M2 8h14M2 13h14" stroke="#d0d4da" stroke-width="2" stroke-dasharray="2 3"/></svg><i class="dd"></i></button>
    </div>
    <div class="grp">
      <button aria-label="Ortho"><svg width="16" height="16" viewBox="0 0 16 16" fill="none" stroke="#d0d4da"><path d="M1.500 0v14.500H16M1.500 10h5v4"/></svg></button>
      <button class="pair" aria-label="Polar"><svg width="16" height="16" viewBox="0 0 16 16" fill="none" stroke="#d0d4da"><path d="M10 3a6 6 0 1 0 3 6M7 9l6-7M7 9h9M11 5q2 2 1 5"/></svg><i class="dd"></i></button>
      <button class="pair" aria-label="Isodraft"><svg width="16" height="16" viewBox="0 0 16 16"><path d="M2 2l12 12" stroke="#c05a68"/><path d="M8.500 1v14" stroke="#5cb88a"/><path d="M7 7h3v3H7z" fill="#ddd"/></svg><i class="dd"></i></button>
      <button class="lit" aria-label="Tracking"><svg width="18" height="16" viewBox="0 0 18 16" fill="none" stroke="#fff"><path d="M16 1L2 13.500h15"/><path d="M8 6h3v3H8z" fill="#fff"/></svg></button>
      <button class="lit" aria-label="Object snap"><svg width="18" height="18" viewBox="0 0 18 18" fill="none" stroke="#fff"><path d="M1.500 1.500h4v4h-4zM6 3.500h10.500v12h-13V6"/></svg></button>
      <button class="tail" aria-label="Snap options"><i class="dd"></i></button>
    </div>
    <div class="grp"><button aria-label="Lineweight"><svg width="18" height="16" viewBox="0 0 18 16" stroke="#d0d4da"><path d="M1 2.500h16M1 7.500h8M11 6.500h6M11 9.500h6M1 13h8M11 13.500h6"/><path d="M1 8h8M1 13h8" stroke-width="3"/></svg></button></div>
    <div class="grp last">
      <button class="lit" aria-label="Annotation visibility"><svg width="18" height="16" viewBox="0 0 18 16"><use href="#man" width="15" height="16"/><circle cx="14" cy="4" r="2.500" fill="none" stroke="#fff"/></svg></button>
      <button aria-label="Auto scale"><svg width="18" height="16" viewBox="0 0 18 16"><use href="#man" width="15" height="16"/><path d="M15 0l-4 5h3l-2 4 5-5h-3z" fill="#d8dce0"/></svg></button>
      <button class="scale"><svg width="16" height="16" viewBox="0 0 16 16"><use href="#man" width="16" height="16"/></svg>1:1<i class="dd"></i></button>
    </div>
  </div>
</footer>
</body>
</html>
```
FILE: styles.css
```css
* { box-sizing: border-box; }
body { margin: 0; min-height: 100vh; display: flex; flex-direction: column; background: #212832; color: #e2e4e8; font: 12px/16px "Open Sans", "Noto Sans", sans-serif; overflow-x: hidden; }
button { margin: 0; padding: 0; border: 0; background: none; color: inherit; font: inherit; }
select, input { font: inherit; color: inherit; margin: 0; }
a { color: inherit; text-decoration: none; }
svg { display: block; flex: none; }
.defs { position: absolute; width: 0; height: 0; }
.dd { flex: none; width: 0; height: 0; border: 4px solid transparent; border-top-color: #d8dbe0; border-bottom: 0; }
.dd.s { border-width: 3px 3px 0; }
.dd.dark { border-top-color: #555b66; }
.pair { display: flex; align-items: center; }

/* AutoLANDSCAPE strip */
.plugin { height: 68px; padding-top: 3px; border-top: 1px solid #000; overflow: hidden; display: flex; align-items: flex-start; color: #fff; white-space: nowrap;
  background: linear-gradient(to top, rgba(176,156,104,.4), transparent), linear-gradient(90deg, #bf8f70 0, #b59368 160px, #af9a6c 34%, #a49d78 50%, #83997f 66%, #5c8888 78%, #3f858e 88%, #2a828f 100%); }
.glass { background: rgba(255,255,255,.27); }
.sun { width: 21px; height: 70px; padding-top: 23px; }
.curb { margin-left: 4px; width: 71px; height: 70px; background: #5e5b59; }
.catalog { margin-left: 3px; width: 57px; height: 70px; display: flex; flex-direction: column; gap: 1px; padding-top: 2px; }
.tool { display: flex; flex-direction: column; align-items: center; font-size: 11px; }
.dims { margin-left: 7px; width: 154px; height: 70px; padding: 3px 3px 0; display: flex; flex-direction: column; gap: 3px; color: #111; }
.dims-row { display: flex; }
.preset, .yes { appearance: none; border: 1px solid #c8c4be; border-radius: 0; background: #d5d1ca url("data:image/svg+xml,%3Csvg xmlns='http://www.w3.org/2000/svg' width='8' height='5'%3E%3Cpath d='M0 0l4 4 4-4' fill='none' stroke='%23333' stroke-width='1.500'/%3E%3C/svg%3E") no-repeat right 5px center; }
.preset { width: 128px; height: 20px; padding: 0 16px 0 4px; }
.save { width: 20px; height: 20px; border: 1px solid #777; background: #cfcac5; display: grid; place-items: center; }
.fields { align-items: center; height: 21px; color: #fff; font-size: 13px; }
.fields label { width: 30px; padding-left: 3px; }
.fields input { width: 20px; height: 21px; border: 0; padding: 0 0 5px 2px; background: #fff; color: #111; font-size: 12px; }
.fields input + label { width: 36px; padding-left: 5px; }
.yes { margin-left: 4px; width: 37px; height: 21px; padding: 0 5px; color: #222; }
.linecol { margin-left: 6px; width: 98px; }
.linetype { height: 51px; padding: 8px 9px; color: #151515; line-height: 17px; }
.info { display: flex; align-items: center; gap: 3px; font-size: 11px; }
.sketch { margin-left: 6px; width: 140px; height: 51px; padding: 5px; display: flex; gap: 13px; }
.tools { margin-left: 6px; width: 344px; height: 51px; display: flex; justify-content: space-between; padding: 2px 0 0; }
.tools .tool { width: 49px; justify-content: space-between; height: 49px; font-size: 10px; }
.pairs { display: grid; grid-template-rows: 24px 22px; gap: 1px; padding-top: 2px; font-size: 10px; }
.act { font-size: 10px; }
.elev { margin-left: 7px; width: 100px; }
.acts { margin-left: 4px; width: 310px; }
.pairs .glass, .act { display: flex; align-items: center; gap: 4px; }
.elev .act { padding-left: 3px; gap: 3px; }
.pairs .cubes { justify-content: space-between; padding: 0 3px 0 2px; }
.pairs .four { display: grid; grid-template-columns: 89px 70px 70px 75px; gap: 0; padding-left: 2px; }

/* title and tabs */
.head { display: flex; height: 53px; }
.app { margin-top: 9px; width: 37px; height: 40px; border: 1px solid #000; border-left: 0; background: linear-gradient(#dcdcdc, #8f8f8f); display: flex; align-items: flex-start; padding-top: 1px; }
.app .dd { margin-top: 17px; }
.head-main { flex: 1; min-width: 0; display: flex; flex-direction: column; }
.titlebar { height: 35px; padding-top: 3px; display: flex; align-items: center; }
.qat { flex: 6 1 0; min-width: 0; display: flex; align-items: center; padding-left: 9px; gap: 7px; }
.qat button { min-width: 17px; display: flex; justify-content: center; }
.qat .pair { gap: 6px; justify-content: flex-start; }
.qat .sheets { margin-left: 2px; }
.title { display: flex; gap: 12px; color: #f0f0f0; white-space: nowrap; }
.infocenter { flex: 7 1 0; min-width: 0; display: flex; justify-content: flex-end; align-items: center; padding-right: 18px; gap: 9px; }
.infocenter .pair { gap: 4px; }
.search { width: 178px; height: 20px; border: 0; border-radius: 0; padding: 0 3px; background: #465061; appearance: none; margin-right: -3px; }
.search::placeholder { color: #b4bac4; font-style: italic; }
.signin { display: flex; align-items: center; gap: 5px; width: 114px; color: #f0f0f0; }
.signin .dd { margin-left: auto; }
.tabs { height: 18px; display: flex; color: #b6bac2; white-space: nowrap; padding-left: 6px; }
.tabs a { padding: 0 8px 0 9px; line-height: 16px; }
.tabs .on { background: #3c4251; color: #fff; border-radius: 2px 2px 0 0; padding-right: 9px; }
.tabs .pair { gap: 6px; margin-left: 22px; }

/* ribbon */
.ribbon { height: 97px; display: flex; overflow: hidden; }
.panel { flex: none; background: #3c4251; border-right: 1px solid #232a35; display: flex; flex-direction: column; white-space: nowrap; }
.body { flex: 1; display: flex; align-items: flex-start; }
.panel h2 { margin: 0; height: 18px; font-size: 12px; line-height: 18px; font-weight: 400; display: flex; align-items: center; justify-content: center; gap: 7px; }
.launch { margin-left: auto; }
.draw { width: 223px; } .modify { width: 250px; } .annotation { width: 189px; } .layers { width: 272px; } .block { width: 162px; }
.props { width: 265px; } .groups { width: 69px; } .utils { width: 97px; } .clip { width: 80px; } .view { width: 62px; }
.panel.props h2 { padding-left: 92px; padding-right: 4px; }
.props h2 .launch { margin-left: auto; }
.view h2 .launch { margin-left: 0; }
.big { display: flex; flex-direction: column; align-items: center; padding-top: 5px; line-height: 15px; }
.big svg { margin-bottom: 3px; }
.big .dd { margin-top: 2px; }
.w38 { width: 38px; } .w40 { width: 40px; } .w42 { width: 42px; } .w46 { width: 46px; } .w50 { width: 50px; } .w54 { width: 54px; }
.w56 { width: 56px; } .w58 { width: 58px; } .w62 { width: 62px; } .w64 { width: 64px; } .w72 { width: 72px; }
.col { display: flex; flex-direction: column; gap: 2px; padding-top: 5px; }
.row { display: flex; align-items: center; gap: 4px; height: 22px; }
.icons { padding-left: 5px; }
.modify .body { padding-left: 6px; }
.c72 { width: 72px; } .c69 { width: 69px; } .c75 { width: 75px; }
.end { margin-left: auto; margin-right: 12px; }
.ann { padding-left: 4px; }
.blk { padding-left: 1px; }
.combo { flex: 1; display: flex; align-items: center; height: 22px; border: 1px solid #262d38; background: #4a566d; padding: 0 2px 0 2px; }
.combo select { flex: 1; appearance: none; border: 0; background: none; padding: 0 0 0 2px; min-width: 0; }
.combo .color { padding-left: 6px; }
.lay { width: 207px; }
.lay .combo { flex: none; }
.line { display: flex; align-items: center; gap: 6px; height: 22px; }
.lay .line { padding-left: 1px; }
.propcol { flex: 1; padding-right: 2px; }
.propcol .line { gap: 1px; }
.sample { width: 64px; height: 1px; background: #eee; }
.groups .row { width: 24px; justify-content: center; }
.groups .sel { border: 1px solid #6cb8f5; background: #3b5f80; }

/* file tabs */
.files { height: 31px; padding: 5px 0 0 18px; border-bottom: 4px solid #3b4250; display: flex; }
.file { width: 124px; height: 22px; padding: 1px 14px 0 10px; background: #2d3440; color: #a9aeb8; border-radius: 8px 8px 0 0; display: flex; align-items: center; justify-content: space-between; line-height: 22px; }
.file.on { background: #3b4250; color: #e4e6ea; }
.add { margin: 3px 0 0 6px; width: 21px; height: 17px; background: #2d3440; border-radius: 3px; display: grid; place-items: center; }

/* model space */
.canvas { flex: 1; min-height: 480px; position: relative; overflow: hidden; }
.viewport { margin: 6px 0 0; color: #05070a; }
.drawing { position: absolute; inset: 0; width: 100%; height: 100%; }
.ucs { fill: #d5dae0; font: 300 20px "Open Sans", sans-serif; text-anchor: middle; }

/* command line */
.command { height: 107px; border-top: 2px solid #3b4250; display: flex; }
.grip { width: 22px; background: #2b313d; padding: 5px 0 0 1px; display: flex; flex-direction: column; gap: 8px; }
.grip button { height: 15px; padding-left: 2px; display: flex; align-items: flex-start; }
.grip button + button { padding-left: 0; }
.console { flex: 1; display: flex; flex-direction: column; background: #c8c8c8; color: #0a0a0a; font-family: "DejaVu Sans Mono", "Liberation Mono", monospace; }
.console pre { margin: 0; flex: 1; padding: 9px 2px 0 1px; font: inherit; line-height: 15px; }
.prompt { height: 21px; border-top: 1px solid #555; background: #fff; display: flex; align-items: center; gap: 3px; padding: 1px 0 0 4px; }
.prompt .pair { gap: 2px; }
.prompt input { width: 37px; border: 0; outline: 0; padding: 0; background: none; }
.caret { width: 1px; height: 15px; background: #000; margin-left: -3px; }

/* status bar */
.status { height: 28px; border-top: 1px solid #3b4250; display: flex; justify-content: space-between; }
.layouts { display: flex; align-items: flex-start; padding-left: 10px; gap: 2px; color: #a9aeb8; }
.layouts a, .layouts button { height: 17px; line-height: 17px; padding: 0 9px; background: #2a313d; border-radius: 0 0 8px 8px; }
.layouts .on { background: #3b4250; color: #fff; font-weight: 700; padding: 0 10px; }
.modes { display: flex; gap: 2px; padding: 2px 4px 2px 0; }
.grp { background: #343b48; display: flex; align-items: center; gap: 8px; padding: 0 4px; }
.grp .pair { gap: 7px; }
.grp .lit { width: 22px; height: 22px; background: #5a8fcb; display: grid; place-items: center; margin-right: -6px; }
.grp .tail { margin-left: 2px; }
.grp button { display: flex; align-items: center; }
.grp.model { padding: 0 3px; }
.grp .scale { gap: 5px; }
.grp.last { padding-left: 0; }
.grp.last .lit { margin-right: -4px; }
```
